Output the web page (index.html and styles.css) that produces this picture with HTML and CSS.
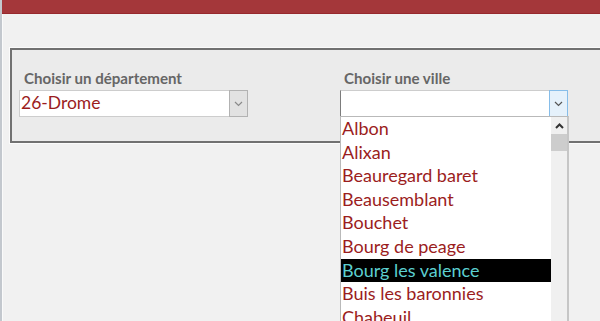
FILE: index.html
```html
<!DOCTYPE html>
<html lang="fr">
  <head>
    <meta charset="UTF-8" />
    <title>Choix de la ville</title>
    <link rel="stylesheet" href="styles.css">
  </head>
  <body>
    <div class="window">
      <div class="titlebar"></div>
      <div class="content">
        <div class="groupbox">
          <div class="field field-dept">
            <label class="field-label">Choisir un département</label>
            <div class="combo">
              <div class="combo-value">26-Drome</div>
              <div class="combo-btn">
                <svg width="9" height="6" viewBox="0 0 9 6"><path d="M1 1 L4.5 4.5 L8 1" fill="none" stroke="#8a8a8a" stroke-width="1.2"/></svg>
              </div>
            </div>
          </div>

          <div class="field field-ville">
            <label class="field-label">Choisir une ville</label>
            <div class="combo combo-open">
              <div class="combo-value"></div>
              <div class="combo-btn">
                <svg width="9" height="6" viewBox="0 0 9 6"><path d="M1 1 L4.5 4.5 L8 1" fill="none" stroke="#555" stroke-width="1.2"/></svg>
              </div>
            </div>
            <div class="dropdown">
              <ul class="options">
                <li>Albon</li>
                <li>Alixan</li>
                <li>Beauregard baret</li>
                <li>Beausemblant</li>
                <li>Bouchet</li>
                <li>Bourg de peage</li>
                <li class="selected">Bourg les valence</li>
                <li>Buis les baronnies</li>
                <li>Chabeuil</li>
              </ul>
              <div class="scrollbar">
                <div class="scroll-up">
                  <svg width="9" height="6" viewBox="0 0 9 6"><path d="M1 5 L4.5 1.5 L8 5" fill="none" stroke="#333" stroke-width="2"/></svg>
                </div>
                <div class="scroll-thumb"></div>
              </div>
            </div>
          </div>
        </div>
      </div>
    </div>
  </body>
</html>
```

FILE: styles.css
```css
body {
  margin: 0;
  padding: 0;
  background-color: #f1f1f1;
  font-family: Lato, "Open Sans", sans-serif;
  width: 600px;
  height: 321px;
  overflow: hidden;
}
.window {
  height: 321px;
  border-left: 2px solid #c3c8ce;
  box-shadow: inset 1px 0 0 #fafafa;
  overflow: hidden;
}
.titlebar {
  height: 13px;
  background-color: #a4373a;
  border-bottom: 1px solid #97292d;
}
.content {
  padding: 34px 0 0 8px;
}
.groupbox {
  width: 640px;
  height: 91px;
  border: 2px solid #717171;
  background-color: #ebebeb;
  box-shadow: 0 0 0 1px #fbfbfb;
  display: flex;
  padding: 0 0 0 7px;
  gap: 92px;
}
.field {
  position: relative;
  padding-top: 19px;
}
.field-label {
  display: block;
  font-weight: bold;
  font-size: 15.1px;
  color: #666;
  line-height: 18px;
  height: 21px;
}
.field-dept .field-label {
  padding-left: 5px;
}
.field-ville .field-label {
  padding-left: 4px;
}
.combo {
  display: flex;
  width: 229px;
  height: 27px;
  box-sizing: border-box;
  background-color: #fff;
  border: 1px solid #cdcdcd;
}
.combo-value {
  flex: 1;
  font-size: 17.5px;
  line-height: 24px;
  color: #9b1d1d;
  padding-left: 1px;
}
.combo-btn {
  width: 17px;
  margin: -1px -1px -1px 0;
  background-color: #e2e2e2;
  border: 1px solid #b2b2b2;
  display: flex;
  align-items: center;
  justify-content: center;
}
.combo-open {
  width: 228px;
  border-left-color: #7c7c7c;
}
.combo-open .combo-btn {
  background-color: #e5f1fb;
  border-color: #86bde9;
}
.dropdown {
  position: absolute;
  left: 0;
  top: 66px;
  width: 229px;
  height: 210px;
  box-sizing: border-box;
  background-color: #fff;
  border: 1px solid #b9b9b9;
  border-right: 2px solid #c6c6c6;
  display: flex;
}
.options {
  list-style: none;
  margin: 0;
  padding: 0;
  flex: 1;
  overflow: hidden;
}
.options li {
  height: 23.6px;
  line-height: 23.6px;
  font-size: 18px;
  color: #9b1d1d;
  padding-left: 1px;
  white-space: nowrap;
}
.options li.selected {
  background-color: #000;
  color: #5ccfd0;
}
.scrollbar {
  width: 16px;
  background-color: #f0f0f0;
}
.scroll-up {
  height: 17px;
  display: flex;
  align-items: center;
  justify-content: center;
}
.scroll-thumb {
  height: 17px;
  background-color: #cdcdcd;
}
```
